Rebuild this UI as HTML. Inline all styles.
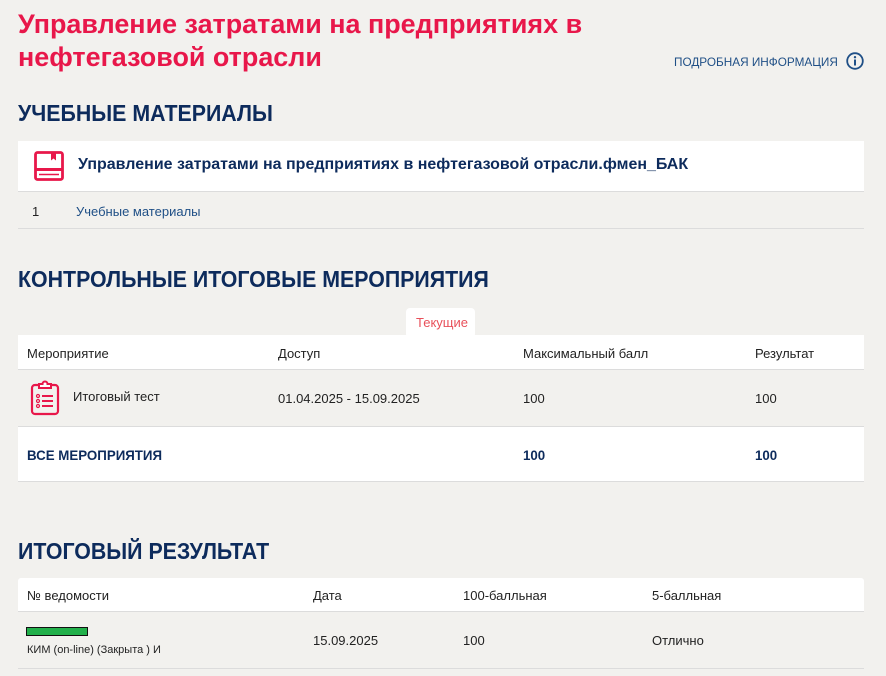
<!DOCTYPE html>
<html><head><meta charset="utf-8"><style>
*{margin:0;padding:0;box-sizing:border-box}
body{width:886px;height:676px;overflow:hidden;background:#f2f1ee;font-family:"Liberation Sans","DejaVu Sans",sans-serif;color:#222;position:relative}
.a{position:absolute}
h1{position:absolute;left:18px;top:8px;font-size:27px;line-height:33px;color:#e8174a;font-weight:bold;transform:scaleX(0.997);transform-origin:left top;white-space:nowrap}
.h2{position:absolute;left:18px;font-weight:bold;font-size:23px;color:#0d2b5c;transform:scaleX(0.928);transform-origin:left top;white-space:nowrap}
.white{position:absolute;left:18px;width:846px;background:#fff}
.line{position:absolute;left:18px;width:846px;height:1px;background:#dcdcdc}
.t{position:absolute;font-size:13px;white-space:nowrap}
.b{font-weight:bold;font-size:14px;color:#0d2b5c;transform:scaleX(0.95);transform-origin:left top}
</style></head><body>
<h1>Управление затратами на предприятиях в<br>нефтегазовой отрасли</h1>
<div class="t" style="left:674px;top:55px;font-size:12px;color:#1f4f86;transform:scaleX(0.98);transform-origin:left top">ПОДРОБНАЯ ИНФОРМАЦИЯ</div>
<svg class="a" style="left:846px;top:52px" width="18" height="18" viewBox="0 0 18 18"><circle cx="9" cy="9" r="7.8" fill="none" stroke="#1f4f86" stroke-width="1.8"/><circle cx="9" cy="5.2" r="1.2" fill="#1f4f86"/><rect x="8" y="7.5" width="2" height="6" fill="#1f4f86"/></svg>

<div class="h2" style="top:100px">УЧЕБНЫЕ МАТЕРИАЛЫ</div>
<div class="white" style="top:141px;height:50px"></div>
<svg class="a" style="left:34px;top:151px" width="30" height="30" viewBox="0 0 30 30"><rect x="1.5" y="1.5" width="27" height="27" rx="2" fill="none" stroke="#e8174a" stroke-width="2.8"/><rect x="1.5" y="17" width="27" height="3" fill="#e8174a"/><line x1="5" y1="23.5" x2="25" y2="23.5" stroke="#e8174a" stroke-width="1.6"/><path d="M17 1.5v8l2.5-2 2.5 2v-8z" fill="#e8174a"/></svg>
<div class="t" style="left:78px;top:156px;font-size:16px;font-weight:bold;color:#0d2b5c">Управление затратами на предприятиях в нефтегазовой отрасли.фмен_БАК</div>
<div class="line" style="top:191px"></div>
<div class="t" style="left:32px;top:204px">1</div>
<div class="t" style="left:76px;top:204px;color:#1f4f86">Учебные материалы</div>
<div class="line" style="top:228px"></div>

<div class="h2" style="top:266px">КОНТРОЛЬНЫЕ ИТОГОВЫЕ МЕРОПРИЯТИЯ</div>
<div class="a" style="left:406px;top:308px;width:69px;height:30px;background:#fff;border-radius:4px"></div>
<div class="t" style="left:416px;top:315px;color:#e8505a">Текущие</div>
<div class="white" style="top:335px;height:34px"></div>
<div class="line" style="top:369px"></div>
<div class="t" style="left:27px;top:346px">Мероприятие</div>
<div class="t" style="left:278px;top:346px">Доступ</div>
<div class="t" style="left:523px;top:346px">Максимальный балл</div>
<div class="t" style="left:755px;top:346px">Результат</div>
<svg class="a" style="left:30px;top:380px" width="30" height="36" viewBox="0 0 30 36"><rect x="2" y="5" width="26" height="29" rx="3" fill="none" stroke="#e8174a" stroke-width="2.2"/><path d="M9 8V4h3.5a2.5 2.5 0 0 1 5 0H21v4z" fill="#fff" stroke="#e8174a" stroke-width="2"/><circle cx="8" cy="16" r="1.5" fill="none" stroke="#e8174a" stroke-width="1.2"/><circle cx="8" cy="21" r="1.5" fill="none" stroke="#e8174a" stroke-width="1.2"/><circle cx="8" cy="26" r="1.5" fill="none" stroke="#e8174a" stroke-width="1.2"/><path d="M12 16h11M12 21h11M12 26h11" stroke="#e8174a" stroke-width="2"/></svg>
<div class="t" style="left:73px;top:389px">Итоговый тест</div>
<div class="t" style="left:278px;top:391px">01.04.2025 - 15.09.2025</div>
<div class="t" style="left:523px;top:391px">100</div>
<div class="t" style="left:755px;top:391px">100</div>
<div class="line" style="top:426px"></div>
<div class="white" style="top:427px;height:54px"></div>
<div class="line" style="top:481px"></div>
<div class="t b" style="left:27px;top:447px">ВСЕ МЕРОПРИЯТИЯ</div>
<div class="t b" style="left:523px;top:447px">100</div>
<div class="t b" style="left:755px;top:447px">100</div>

<div class="h2" style="top:538px">ИТОГОВЫЙ РЕЗУЛЬТАТ</div>
<div class="white" style="top:578px;height:33px;border-radius:3px 3px 0 0"></div>
<div class="line" style="top:611px"></div>
<div class="t" style="left:27px;top:588px">№ ведомости</div>
<div class="t" style="left:313px;top:588px">Дата</div>
<div class="t" style="left:463px;top:588px">100-балльная</div>
<div class="t" style="left:652px;top:588px">5-балльная</div>
<div class="a" style="left:26px;top:627px;width:62px;height:9px;background:#22b04b;border:1px solid #111"></div>
<div class="t" style="left:27px;top:644px;font-size:11px">КИМ (on-line) (Закрыта ) И</div>
<div class="t" style="left:313px;top:633px">15.09.2025</div>
<div class="t" style="left:463px;top:633px">100</div>
<div class="t" style="left:652px;top:633px">Отлично</div>
<div class="line" style="top:668px"></div>
</body></html>
